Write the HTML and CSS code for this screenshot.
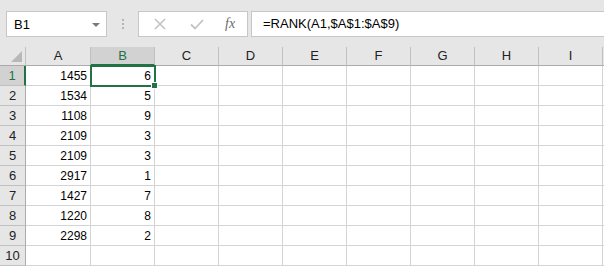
FILE: index.html
```html
<!DOCTYPE html>
<html lang="en">
<head>
  <meta charset="UTF-8">
  <title>RANK</title>
  <link rel="stylesheet" href="styles.css">
</head>
<body>

<!-- formula bar -->
<div class="bar">
  <div class="namebox">
    <span>B1</span>
    <span class="caret"></span>
  </div>
  <div class="grip"><i></i><i></i><i></i></div>
  <div class="buttons">
    <svg class="btn" width="14" height="14" viewBox="0 0 14 14"><path d="M2 2L12 12M12 2L2 12" stroke="#c3c3c3" stroke-width="1.6" fill="none"/></svg>
    <svg class="btn" width="16" height="14" viewBox="0 0 16 14"><path d="M2 7.5L6 11.5L14 3" stroke="#c3c3c3" stroke-width="1.8" fill="none"/></svg>
    <span class="fx">fx</span>
  </div>
  <div class="formula">=RANK(A1,$A$1:$A$9)</div>
</div>

<!-- sheet -->
<div class="sheet" id="sheet">
  <div class="corner"></div>
</div>

<script>
  const cols = ["A", "B", "C", "D", "E", "F", "G", "H", "I"];
  const valuesA = [1455, 1534, 1108, 2109, 2109, 2917, 1427, 1220, 2298];
  const valuesB = [6, 5, 9, 3, 3, 1, 7, 8, 2];
  const sheet = document.getElementById('sheet');

  let html = "";
  cols.forEach(c => {
    html += `<div class="colhead${c === "B" ? " sel" : ""}">${c}</div>`;
  });
  html += `<div class="colhead rest"></div>`;

  for (let r = 1; r <= 10; r++) {
    html += `<div class="rowhead${r === 1 ? " sel" : ""}">${r}</div>`;
    cols.forEach((c, i) => {
      let v = "";
      if (i === 0 && r <= 9) v = valuesA[r - 1];
      if (i === 1 && r <= 9) v = valuesB[r - 1];
      const active = (r === 1 && i === 1) ? " active" : "";
      html += `<div class="cell${active}">${v}</div>`;
    });
    html += `<div class="cell rest"></div>`;
  }
  sheet.innerHTML += html;
</script>

</body>
</html>
```

FILE: styles.css
```css
body {
  margin: 0;
  background: #fff;
  font-family: "Liberation Sans", Arial, sans-serif;
  color: #000;
  overflow: hidden;
}
.bar {
  display: flex;
  align-items: flex-start;
  height: 47px;
  box-sizing: border-box;
  padding: 11px 0 0 6px;
  background: #e6e6e6;
}
.namebox {
  width: 101px;
  height: 26px;
  box-sizing: border-box;
  background: #fff;
  border: 1px solid #c6c6c6;
  display: flex;
  align-items: center;
  justify-content: space-between;
  padding: 0 6px 0 7px;
  font-size: 13px;
}
.caret {
  width: 0;
  height: 0;
  border-left: 4px solid transparent;
  border-right: 4px solid transparent;
  border-top: 4px solid #7a7a7a;
  margin-top: 1px;
}
.grip {
  width: 31px;
  height: 26px;
  display: flex;
  flex-direction: column;
  align-items: center;
  justify-content: center;
  gap: 2px;
}
.grip i {
  width: 2px;
  height: 2px;
  background: #b4b4b4;
}
.buttons {
  width: 110px;
  height: 26px;
  box-sizing: border-box;
  background: #fff;
  border: 1px solid #c6c6c6;
  display: flex;
  align-items: center;
  padding: 0 0 0 14px;
  gap: 22px;
}
.fx {
  font-family: "Liberation Serif", "Times New Roman", serif;
  font-style: italic;
  font-size: 14px;
  color: #6b6b6b;
  margin-left: -2px;
}
.formula {
  flex: 1;
  height: 26px;
  box-sizing: border-box;
  margin-left: 3px;
  background: #fff;
  border: 1px solid #c6c6c6;
  border-right: 0;
  padding-left: 11px;
  font-size: 13px;
  line-height: 24px;
}
.sheet {
  display: grid;
  grid-template-columns: 26px 65px repeat(8, 64px) 1fr;
  grid-template-rows: 19px repeat(10, 20px);
  background: #e6e6e6;
  font-size: 12px;
}
.corner {
  position: relative;
  background: #e6e6e6;
  border-right: 1px solid #c0c0c0;
  border-bottom: 1px solid #ababab;
}
.corner::after {
  content: "";
  position: absolute;
  right: 3px;
  bottom: 3px;
  width: 0;
  height: 0;
  border-left: 11px solid transparent;
  border-bottom: 11px solid #b8b8b8;
}
.colhead, .rowhead, .cell {
  box-sizing: border-box;
}
.colhead {
  background: #e6e6e6;
  border-right: 1px solid #c0c0c0;
  border-bottom: 1px solid #ababab;
  text-align: center;
  font-size: 13px;
  line-height: 18px;
  color: #222;
}
.colhead.rest {
  border-right: 0;
}
.colhead.sel {
  background: #d2d2d2;
  color: #217346;
  border-bottom: 2px solid #217346;
}
.rowhead {
  background: #e6e6e6;
  border-right: 1px solid #ababab;
  border-bottom: 1px solid #c0c0c0;
  text-align: center;
  font-size: 13px;
  line-height: 19px;
  color: #222;
}
.rowhead.sel {
  background: #d2d2d2;
  color: #217346;
  border-right: 2px solid #217346;
}
.cell {
  background: #fff;
  border-right: 1px solid #d4d4d4;
  border-bottom: 1px solid #d4d4d4;
  text-align: right;
  padding-right: 3px;
  line-height: 20px;
}
.cell.rest {
  border-right: 0;
}
.cell.active {
  position: relative;
  outline: 2px solid #217346;
  outline-offset: -1px;
  z-index: 1;
}
.cell.active::after {
  content: "";
  position: absolute;
  right: -4px;
  bottom: -4px;
  width: 5px;
  height: 5px;
  background: #217346;
  border: 1px solid #fff;
}
```
